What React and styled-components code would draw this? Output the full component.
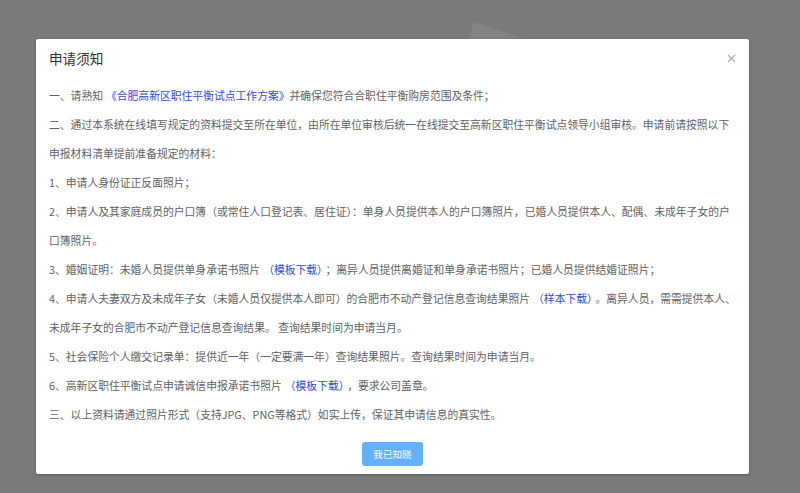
import {Fragment} from 'react'
import styled, {createGlobalStyle} from 'styled-components'

const GlobalStyle = createGlobalStyle`
    html, body {
        margin: 0;
        padding: 0;
        background: #7a7a7c;
    }
    body {
        font-family: "Noto Sans CJK SC", "Noto Sans", sans-serif;
    }
`;

const notes = [
    ["一、请熟知", {link: "《合肥高新区职住平衡试点工作方案》", tight: true}, "并确保您符合合职住平衡购房范围及条件；"],
    ["二、通过本系统在线填写规定的资料提交至所在单位，由所在单位审核后统一在线提交至高新区职住平衡试点领导小组审核。申请前请按照以下申报材料清单提前准备规定的材料："],
    ["1、申请人身份证正反面照片；"],
    ["2、申请人及其家庭成员的户口簿（或常住人口登记表、居住证）：单身人员提供本人的户口簿照片，已婚人员提供本人、配偶、未成年子女的户口簿照片。"],
    ["3、婚姻证明：未婚人员提供单身承诺书照片", {link: "（模板下载）"}, "；离异人员提供离婚证和单身承诺书照片；已婚人员提供结婚证照片；"],
    ["4、申请人夫妻双方及未成年子女（未婚人员仅提供本人即可）的合肥市不动产登记信息查询结果照片", {link: "（样本下载）"}, "。离异人员，需需提供本人、未成年子女的合肥市不动产登记信息查询结果。 查询结果时间为申请当月。"],
    ["5、社会保险个人缴交记录单：提供近一年（一定要满一年）查询结果照片。查询结果时间为申请当月。"],
    ["6、高新区职住平衡试点申请诚信申报承诺书照片", {link: "（模板下载）"}, "，要求公司盖章。"],
    ["三、以上资料请通过照片形式（支持JPG、PNG等格式）如实上传，保证其申请信息的真实性。"],
];

export default function App() {
    return (
        <>
            <GlobalStyle/>
            <Overlay>
                <Backdrop width="800" height="493" viewBox="0 0 800 493">
                    <polygon points="474,22 540,44 466,44" fill="#838386"/>
                </Backdrop>
                <Dialog>
                    <Header>
                        <Title>申请须知</Title>
                        <Close aria-label="close">
                            <svg width="9" height="9" viewBox="0 0 9 9">
                                <path d="M1 1 L8 8 M8 1 L1 8" stroke="#a8abb2" strokeWidth="1.2" fill="none"/>
                            </svg>
                        </Close>
                    </Header>
                    <Body>
                        {notes.map((parts, i) => (
                            <Line key={i}>
                                {parts.map((p, j) =>
                                    typeof p === 'string'
                                        ? <Fragment key={j}>{p}</Fragment>
                                        : <Link key={j} $tight={p.tight}>{p.link}</Link>
                                )}
                            </Line>
                        ))}
                    </Body>
                    <Footer>
                        <Button>我已知晓</Button>
                    </Footer>
                </Dialog>
            </Overlay>
        </>
    );
}

const Overlay = styled.div`
    position: relative;
    width: 800px;
    height: 493px;
    overflow: hidden;
    background: #7a7a7c;
    display: flex;
    flex-direction: column;
    align-items: flex-start;
`;

const Backdrop = styled.svg`
    position: absolute;
    left: 0;
    top: 0;
`;

const Dialog = styled.div`
    position: relative;
    margin: 39px 0 0 36px;
    width: 713px;
    height: 435px;
    box-sizing: border-box;
    background: #fff;
    border-radius: 2px;
    box-shadow: 0 1px 3px rgba(0, 0, 0, 0.3);
    display: flex;
    flex-direction: column;
`;

const Header = styled.div`
    display: flex;
    align-items: center;
    justify-content: space-between;
    padding: 11px 10px 0 13px;
`;

const Title = styled.h1`
    margin: 0;
    font-size: 13.6px;
    line-height: 16px;
    font-weight: 400;
    color: #303133;
`;

const Close = styled.button`
    display: flex;
    align-items: center;
    justify-content: center;
    width: 16px;
    height: 16px;
    padding: 0;
    border: none;
    background: none;
`;

const Body = styled.div`
    padding: 15px 12px 0 13px;
    font-size: 10.8px;
    line-height: 29px;
    color: #606266;
`;

const Line = styled.p`
    margin: 0;
`;

const Link = styled.span`
    color: #2f4ae0;
    margin: ${p => (p.$tight ? '0 0 0 3px' : '0 3px')};
`;

const Footer = styled.div`
    display: flex;
    justify-content: center;
    padding-top: 13px;
`;

const Button = styled.button`
    width: 61px;
    height: 24px;
    border: none;
    border-radius: 3px;
    background: #66b1ff;
    color: #fff;
    font-family: "Noto Sans CJK SC", sans-serif;
    font-size: 9.6px;
    padding: 0;
`;
